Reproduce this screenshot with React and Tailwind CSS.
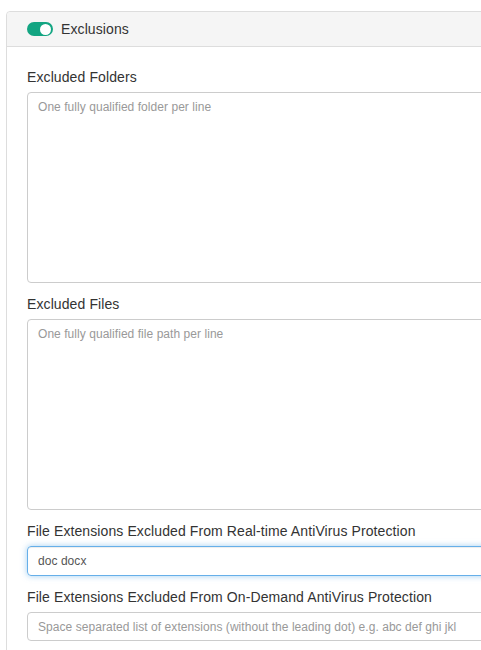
import React from "react";

const font = { fontFamily: '"Liberation Sans", Arial, sans-serif' };

function Toggle() {
    return (
        <span className="relative inline-block w-[26px] h-[14px] rounded-full bg-[#13a582]">
            <span className="absolute right-[2px] top-[1.5px] w-[11px] h-[11px] rounded-full bg-white" />
        </span>
    );
}

function Field({ label, children, last }) {
    return (
        <div className={last ? "" : "mb-[11px]"}>
            <label className="block text-[14px] leading-[20px] tracking-[0.1px] text-[#333] mb-[5px]">{label}</label>
            {children}
        </div>
    );
}

export default function App() {
    return (
        <div className="w-[481px] h-[650px] overflow-hidden bg-white text-[#333]" style={font}>
            <div className="pt-[11px] pl-[6px]">
                <div className="w-[540px] border border-[#ddd] rounded-tl-[4px]">
                    {/* HEADER */}
                    <div className="flex items-center gap-[8px] h-[35px] px-[20px] bg-[#f5f5f5] border-b border-[#ddd] rounded-tl-[4px]">
                        <Toggle />
                        <span className="text-[14px] leading-[20px] tracking-[0.1px] text-[#333]">Exclusions</span>
                    </div>

                    {/* BODY */}
                    <div className="pt-[20px] px-[20px] pb-[20px]">
                        <Field label="Excluded Folders">
                            <textarea
                                className="block w-full h-[191px] resize-none rounded-[4px] border border-[#ccc] px-[10px] py-[6px] text-[12px] leading-[17px] tracking-[0.05px] outline-none placeholder:text-[#999]"
                                placeholder="One fully qualified folder per line"
                            />
                        </Field>
                        <Field label="Excluded Files">
                            <textarea
                                className="block w-full h-[191px] resize-none rounded-[4px] border border-[#ccc] px-[10px] py-[6px] text-[12px] leading-[17px] tracking-[0.05px] outline-none placeholder:text-[#999]"
                                placeholder="One fully qualified file path per line"
                            />
                        </Field>
                        <Field label="File Extensions Excluded From Real-time AntiVirus Protection">
                            <input
                                className="block w-full h-[30px] rounded-[4px] border border-[#66afe9] px-[10px] text-[12px] tracking-[0.05px] text-[#555] outline-none shadow-[inset_0_1px_1px_rgba(0,0,0,0.075),0_0_6px_rgba(102,175,233,0.6)]"
                                defaultValue="doc docx"
                            />
                        </Field>
                        <Field label="File Extensions Excluded From On-Demand AntiVirus Protection" last>
                            <input
                                className="block w-full h-[29px] rounded-[4px] border border-[#ccc] px-[10px] text-[12px] tracking-[0.05px] outline-none placeholder:text-[#999]"
                                placeholder="Space separated list of extensions (without the leading dot) e.g. abc def ghi jkl"
                            />
                        </Field>
                    </div>
                </div>
            </div>
        </div>
    );
}
